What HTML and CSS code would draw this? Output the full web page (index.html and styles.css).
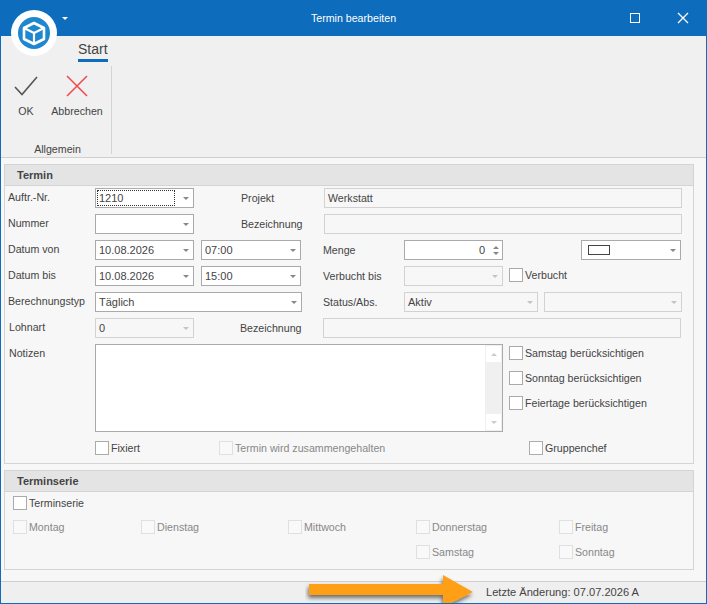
FILE: index.html
```html
<!DOCTYPE html>
<html lang="de">
<head>
    <meta charset="UTF-8">
    <title>Termin bearbeiten</title>
    <link rel="stylesheet" href="styles.css">
</head>
<body>
<div class="window">
    <!-- Titelleiste -->
    <div class="titlebar">
        <span class="qat-caret"></span>
        <span class="title">Termin bearbeiten</span>
        <span class="btn-max"></span>
        <svg class="btn-close" width="12" height="12" viewBox="0 0 12 12"><path d="M1 1 L11 11 M11 1 L1 11" stroke="#fff" stroke-width="1.3" fill="none"/></svg>
    </div>

    <!-- Logo liegt über Titelleiste und Ribbon -->
    <div class="logo">
        <svg width="46" height="46" viewBox="0 0 46 46">
            <circle cx="23" cy="23" r="23" fill="#fff"/>
            <circle cx="23" cy="23" r="16" fill="#1f87d0"/>
            <path d="M23 13 L33 18 V29 L23 34 L13 29 V18 Z" fill="none" stroke="#fff" stroke-width="2.6" stroke-linejoin="round"/>
            <path d="M13 18 L23 23 L33 18 M23 23 V34" fill="none" stroke="#fff" stroke-width="2.2"/>
        </svg>
    </div>

    <!-- Ribbon -->
    <div class="ribbon">
        <div class="tabs"><span class="tab">Start</span></div>
        <div class="ribbon-group">
            <div class="group-items">
                <div class="cmd cmd-ok">
                    <svg width="24" height="20" viewBox="0 0 24 20"><path d="M1 11 L8 18.5 L23 1" fill="none" stroke="#555" stroke-width="1.6"/></svg>
                    <span>OK</span>
                </div>
                <div class="cmd cmd-cancel">
                    <svg width="22" height="22" viewBox="0 0 22 22"><path d="M1 1 L21 21 M21 1 L1 21" fill="none" stroke="#f0474b" stroke-width="1.5"/></svg>
                    <span>Abbrechen</span>
                </div>
            </div>
            <div class="group-label">Allgemein</div>
        </div>
    </div>

    <div class="content">
        <!-- Termin -->
        <section class="panel panel-termin">
            <h2 class="panel-head">Termin</h2>
            <div class="rows">
                <div class="row">
                    <label class="lbl lbl-first">Auftr.-Nr.</label>
                    <div class="combo w98 focus"><span class="val"><i>1210</i></span><b class="caret"></b></div>
                    <label class="lbl lbl-mid">Projekt</label>
                    <div class="input off w358">Werkstatt</div>
                </div>
                <div class="row">
                    <label class="lbl lbl-first">Nummer</label>
                    <div class="combo w98"><span class="val"></span><b class="caret"></b></div>
                    <label class="lbl lbl-mid">Bezeichnung</label>
                    <div class="input off w358"></div>
                </div>
                <div class="row">
                    <label class="lbl lbl-first">Datum von</label>
                    <div class="combo w98"><span class="val">10.08.2026</span><b class="caret"></b></div>
                    <div class="combo w99 ml7"><span class="val">07:00</span><b class="caret"></b></div>
                    <label class="lbl lbl-right">Menge</label>
                    <div class="spin w98"><span class="val">0</span><span class="arrows"><b class="up"></b><b class="down"></b></span></div>
                    <div class="combo w99 color"><span class="val"><em class="swatch"></em></span><b class="caret"></b></div>
                </div>
                <div class="row">
                    <label class="lbl lbl-first">Datum bis</label>
                    <div class="combo w98"><span class="val">10.08.2026</span><b class="caret"></b></div>
                    <div class="combo w99 ml7"><span class="val">15:00</span><b class="caret"></b></div>
                    <label class="lbl lbl-right">Verbucht bis</label>
                    <div class="combo off w98"><span class="val"></span><b class="caret"></b></div>
                    <label class="check ml6 up2"><span class="box"></span>Verbucht</label>
                </div>
                <div class="row">
                    <label class="lbl lbl-first">Berechnungstyp</label>
                    <div class="combo w206"><span class="val">Täglich</span><b class="caret"></b></div>
                    <label class="lbl lbl-right lbl-status">Status/Abs.</label>
                    <div class="combo off w133"><span class="val">Aktiv</span><b class="caret"></b></div>
                    <div class="combo off w137 ml6"><span class="val"></span><b class="caret"></b></div>
                </div>
                <div class="row">
                    <label class="lbl lbl-first lbl-lohn">Lohnart</label>
                    <div class="combo off w98"><span class="val">0</span><b class="caret"></b></div>
                    <label class="lbl lbl-mid2">Bezeichnung</label>
                    <div class="input off w358"></div>
                </div>
            </div>

            <div class="notes-row">
                <label class="lbl lbl-first lbl-notes">Notizen</label>
                <div class="notes">
                    <div class="notes-text"></div>
                    <div class="scroll">
                        <span class="sbtn"><b class="up"></b></span>
                        <span class="sbtn"><b class="down"></b></span>
                    </div>
                </div>
                <div class="side-checks">
                    <label class="check"><span class="box"></span>Samstag berücksichtigen</label>
                    <label class="check"><span class="box"></span>Sonntag berücksichtigen</label>
                    <label class="check"><span class="box"></span>Feiertage berücksichtigen</label>
                </div>
            </div>

            <div class="check-row">
                <label class="check c-fix"><span class="box"></span>Fixiert</label>
                <label class="check off c-zus"><span class="box"></span>Termin wird zusammengehalten</label>
                <label class="check"><span class="box"></span>Gruppenchef</label>
            </div>
        </section>

        <!-- Terminserie -->
        <section class="panel panel-serie">
            <h2 class="panel-head">Terminserie</h2>
            <label class="check serie-main"><span class="box"></span>Terminserie</label>
            <div class="days">
                <label class="check off"><span class="box"></span>Montag</label>
                <label class="check off"><span class="box"></span>Dienstag</label>
                <label class="check off"><span class="box"></span>Mittwoch</label>
                <label class="check off"><span class="box"></span>Donnerstag</label>
                <label class="check off"><span class="box"></span>Freitag</label>
                <label class="check off d4"><span class="box"></span>Samstag</label>
                <label class="check off"><span class="box"></span>Sonntag</label>
            </div>
        </section>
    </div>

    <div class="statusbar">Letzte Änderung: 07.07.2026 A</div>

    <!-- Pfeil liegt über der Statusleiste -->
    <svg class="arrow" width="180" height="40" viewBox="0 0 180 40">
        <defs>
            <filter id="arrow-shadow" x="-10%" y="-30%" width="120%" height="170%">
                <feDropShadow dx="-1" dy="3" stdDeviation="2" flood-color="#000" flood-opacity="0.55"/>
            </filter>
        </defs>
        <path d="M4 9 H138 V0 L168 17 L138 32 V20 H4 Z" fill="#ff9f17" filter="url(#arrow-shadow)"/>
    </svg>
</div>
</body>
</html>
```

FILE: styles.css
```css
* {
    box-sizing: border-box;
}

html, body {
    margin: 0;
    padding: 0;
}

body {
    font-family: "Liberation Sans", Arial, sans-serif;
    font-size: 10.65px;
    color: #444;
}

/* Fenster */
.window {
    position: relative;
    width: 707px;
    height: 604px;
    display: flex;
    flex-direction: column;
    background-color: #f7f7f7;
    border: 1px solid #0e6cbd;
    border-top: 0;
    overflow: hidden;
}

.titlebar {
    position: relative;
    height: 36px;
    margin: 0 -1px;
    flex: none;
    background-color: #0e6cbd;
    display: flex;
    align-items: center;
    justify-content: center;
}

.title {
    color: #fff;
}

.qat-caret {
    position: absolute;
    left: 62px;
    top: 17px;
    border-left: 3px solid transparent;
    border-right: 3px solid transparent;
    border-top: 3px solid #fff;
}

.btn-max {
    position: absolute;
    left: 630px;
    top: 13px;
    width: 10px;
    height: 10px;
    border: 1px solid #fff;
}

.btn-close {
    position: absolute;
    left: 677px;
    top: 12px;
}

.logo {
    position: absolute;
    left: 10px;
    top: 10px;
    width: 46px;
    height: 46px;
    z-index: 2;
}

.logo svg {
    display: block;
}

/* Ribbon */
.ribbon {
    height: 122px;
    flex: none;
    background-color: #f0f0f0;
    border-bottom: 1px solid #cfcfcf;
    position: relative;
}

.tabs {
    height: 26px;
    padding: 6px 0 0 77px;
}

.tab {
    display: inline-block;
    height: 20px;
    line-height: 15px;
    font-size: 14px;
    border-bottom: 3px solid #0e6cbd;
    color: #444;
}

.ribbon-group {
    width: 111px;
    height: 88px;
    margin-top: 4px;
    border-right: 1px solid #d4d4d4;
    display: flex;
    flex-direction: column;
}

.group-items {
    height: 64px;
    display: flex;
    padding-left: 12px;
}

.cmd {
    display: flex;
    flex-direction: column;
    align-items: center;
    height: 64px;
}

.cmd svg {
    flex: none;
}

.cmd span {
    line-height: 14px;
}

.cmd-ok {
    width: 26px;
    padding-top: 10px;
}

.cmd-ok span {
    margin-top: 8px;
}

.cmd-cancel {
    width: 52px;
    margin-left: 12px;
    padding-top: 9px;
}

.cmd-cancel span {
    margin-top: 7px;
}

.group-label {
    text-align: center;
    line-height: 14px;
    margin-top: 12px;
    padding-left: 3px;
}

/* Inhalt */
.content {
    flex: 1;
    padding: 6px 0 0 3px;
    display: flex;
    flex-direction: column;
    gap: 6px;
}

.panel {
    width: 690px;
    border: 1px solid #d4d4d4;
    background-color: #f7f7f7;
}

.panel-termin {
    height: 300px;
}

.panel-serie {
    height: 100px;
}

.panel-head {
    margin: 0;
    height: 21px;
    line-height: 20px;
    padding-left: 12px;
    font-size: 11px;
    font-weight: bold;
    color: #444;
    background-color: #e4e4e4;
    border-bottom: 1px solid #d4d4d4;
}

.rows {
    display: flex;
    flex-direction: column;
    gap: 6px;
    padding-top: 2px;
}

.row {
    display: flex;
    align-items: center;
    height: 20px;
}

.lbl {
    flex: none;
    line-height: 14px;
    white-space: nowrap;
}

.lbl-first {
    width: 90px;
    padding-left: 3px;
    position: relative;
    top: -1px;
}

.lbl-lohn {
    padding-left: 4px;
}

.lbl-mid {
    width: 83px;
    margin-left: 47px;
}

.lbl-mid2 {
    width: 83px;
    margin-left: 46px;
}

.lbl-right {
    width: 81px;
    margin-left: 22px;
}

.lbl-status {
    margin-left: 21px;
}

/* Felder */
.combo, .input, .spin {
    flex: none;
    height: 20px;
    background-color: #fff;
    border: 1px solid #aaa;
    display: flex;
    align-items: center;
}

.input {
    padding-left: 3px;
}

.off.combo, .off.input {
    background-color: #f7f7f7;
    border-color: #d2d2d2;
}

.w98 { width: 99px; }
.w99 { width: 100px; }
.w133 { width: 134px; }
.w137 { width: 138px; }
.w206 { width: 207px; }
.w358 { width: 358px; }
.ml6 { margin-left: 6px; }
.ml7 { margin-left: 7px; }

.color {
    margin-left: 78px;
}

.val {
    flex: 1;
    padding-left: 3px;
    font-size: 11px;
    overflow: hidden;
    white-space: nowrap;
}

.val i {
    font-style: normal;
    display: block;
    width: 78px;
    padding-left: 1px;
    margin-left: -2px;
    border: 1px dotted #333;
    line-height: 14px;
}

.caret {
    flex: none;
    margin-right: 4px;
    width: 0;
    height: 0;
    border-left: 3px solid transparent;
    border-right: 3px solid transparent;
    border-top: 3px solid #888;
}

.off .caret {
    border-top-color: #c4c4c4;
}

.swatch {
    display: block;
    width: 22px;
    height: 10px;
    margin-left: 3px;
    border: 1px solid #444;
    background-color: #fff;
}

.spin .val {
    text-align: right;
    padding-right: 8px;
}

.arrows {
    flex: none;
    display: flex;
    flex-direction: column;
    gap: 3px;
    margin-right: 3px;
}

.up, .down {
    display: block;
    width: 0;
    height: 0;
    border-left: 3px solid transparent;
    border-right: 3px solid transparent;
}

.up {
    border-bottom: 3px solid #888;
}

.down {
    border-top: 3px solid #888;
}

/* Notizen */
.notes-row {
    display: flex;
    margin-top: 6px;
    height: 88px;
}

.lbl-notes {
    padding-left: 4px;
    top: 2px;
    height: 14px;
}

.notes {
    flex: none;
    width: 408px;
    border: 1px solid #aaa;
    background-color: #fff;
    display: flex;
}

.notes-text {
    flex: 1;
}

.scroll {
    width: 17px;
    background-color: #f0f0f0;
    display: flex;
    flex-direction: column;
    justify-content: space-between;
}

.sbtn {
    height: 16px;
    margin: 1px;
    width: 15px;
    background-color: #fff;
    display: flex;
    align-items: center;
    justify-content: center;
}

.sbtn .up {
    border-bottom-color: #ccc;
}

.sbtn .down {
    border-top-color: #ccc;
}

.side-checks {
    margin-left: 6px;
    padding-top: 2px;
    display: flex;
    flex-direction: column;
    gap: 11px;
}

/* Checkboxen */
.check {
    display: flex;
    align-items: center;
    height: 14px;
    line-height: 14px;
    white-space: nowrap;
    flex: none;
}

.box {
    flex: none;
    width: 14px;
    height: 14px;
    margin-right: 2px;
    background-color: #fff;
    border: 1px solid #aaa;
}

.check.off {
    color: #888;
}

.check.off .box {
    background-color: #f9f9f9;
    border-color: #e0e0e0;
}

.up2 {
    margin-top: -2px;
}

.check-row {
    display: flex;
    margin-top: 9px;
    padding-left: 90px;
}

.c-fix {
    width: 124px;
}

.c-zus {
    width: 310px;
}

/* Terminserie */
.serie-main {
    margin: 4px 0 0 8px;
}

.days {
    display: grid;
    grid-template-columns: 128px 147px 128px 143px 100px;
    row-gap: 11px;
    margin: 10px 0 0 8px;
}

.d4 {
    grid-column: 4;
}

/* Statusleiste */
.statusbar {
    height: 22px;
    flex: none;
    background-color: #efefef;
    border-top: 1px solid #cfcfcf;
    padding-left: 485px;
    font-size: 11.1px;
    line-height: 21px;
}

.arrow {
    position: absolute;
    left: 304px;
    top: 575px;
}
```
